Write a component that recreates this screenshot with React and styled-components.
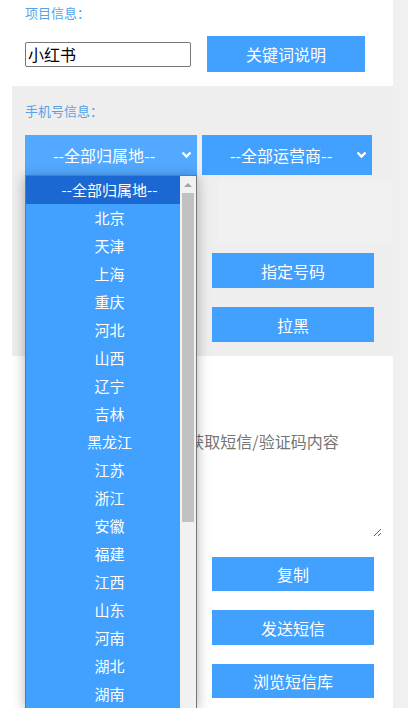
import React from "react";
import styled, { createGlobalStyle } from "styled-components";

const provinces = [
  "北京", "天津", "上海", "重庆", "河北", "山西", "辽宁", "吉林", "黑龙江",
  "江苏", "浙江", "安徽", "福建", "江西", "山东", "河南", "湖北", "湖南",
];

function Chevron() {
  return (
    <svg width="11" height="8" viewBox="0 0 11 8">
      <path d="M1.5 1.5 L5.5 5.5 L9.5 1.5" fill="none" stroke="#fff" strokeWidth="2.4" />
    </svg>
  );
}

function App() {
  return (
    <>
      <GlobalStyle />
      <Page>
        <ProjectBlock>
          <Label>项目信息：</Label>
          <Row>
            <NameInput defaultValue="小红书" />
            <BlueButton width="158px" height="36px">关键词说明</BlueButton>
          </Row>
        </ProjectBlock>

        <PhoneBlock>
          <Label>手机号信息：</Label>
          <SelectRow>
            <FakeSelect width="172px" focused>
              <span>--全部归属地--</span>
              <Chevron />
            </FakeSelect>
            <FakeSelect width="170px">
              <span>--全部运营商--</span>
              <Chevron />
            </FakeSelect>
          </SelectRow>
          <ActionRow>
            <Column>
              <PhoneArea />
              <BlueButton width="162px" height="35px">指定号码</BlueButton>
              <BlueButton width="162px" height="35px" top="19px">拉黑</BlueButton>
            </Column>
          </ActionRow>
        </PhoneBlock>

        <SmsBlock>
          <SmsArea placeholder="获取短信/验证码内容" />
          <ButtonStack>
            <BlueButton width="162px" height="34px">复制</BlueButton>
            <BlueButton width="162px" height="35px" top="19px">发送短信</BlueButton>
            <BlueButton width="162px" height="34px" top="19px">浏览短信库</BlueButton>
          </ButtonStack>
        </SmsBlock>

        <DropList>
          <Options>
            <Option selected>--全部归属地--</Option>
            {provinces.map((p) => (
              <Option key={p}>{p}</Option>
            ))}
          </Options>
          <ScrollTrack>
            <UpArrow />
            <Thumb />
          </ScrollTrack>
        </DropList>
      </Page>
    </>
  );
}

export default App;

const GlobalStyle = createGlobalStyle`
  html, body {
    margin: 0;
    padding: 0;
    background: #f0f0f0;
    overflow: hidden;
    font-family: "Noto Sans CJK SC", "Noto Sans", sans-serif;
  }
`;

const Page = styled.div`
  position: relative;
  width: 393px;
  height: 708px;
  overflow: hidden;
  background: #fff;
`;

const Label = styled.div`
  font-size: 13px;
  line-height: 16px;
  color: #55a3e8;
`;

const ProjectBlock = styled.div`
  padding: 5px 0 14px 25px;
`;

const Row = styled.div`
  display: flex;
  align-items: center;
  margin-top: 15px;
  gap: 16px;
`;

const NameInput = styled.input`
  box-sizing: border-box;
  width: 166px;
  height: 25px;
  border: 1px solid #767676;
  border-radius: 2px;
  padding: 0 2px;
  font-family: "Noto Sans CJK SC", sans-serif;
  font-size: 16px;
  color: #000;
  outline: none;
`;

const BlueButton = styled.div`
  display: flex;
  align-items: center;
  justify-content: center;
  width: ${(p) => p.width};
  height: ${(p) => p.height};
  margin-top: ${(p) => p.top || "0"};
  background: #42a0fe;
  color: #fff;
  font-size: 16px;
`;

const PhoneBlock = styled.div`
  margin-left: 12px;
  height: 270px;
  box-sizing: border-box;
  padding: 17px 0 0 13px;
  background: #eeeeee;
`;

const SelectRow = styled.div`
  display: flex;
  gap: 5px;
  margin-top: 16px;
`;

const FakeSelect = styled.div`
  display: flex;
  align-items: center;
  justify-content: space-between;
  box-sizing: border-box;
  width: ${(p) => p.width};
  height: 40px;
  padding: 0 5px 0 28px;
  background: ${(p) => (p.focused ? "#52a9ff" : "#42a0fe")};
  color: #fff;
  font-size: 16px;
`;

const ActionRow = styled.div`
  display: flex;
  padding-left: 187px;
  margin-top: 5px;
`;

const Column = styled.div`
  display: flex;
  flex-direction: column;
`;

const PhoneArea = styled.div`
  width: 174px;
  height: 63px;
  margin: 0 0 10px 6px;
  background: #f1f1f1;
`;

const SmsBlock = styled.div`
  display: flex;
  flex-direction: column;
  padding: 72px 0 0 145px;
`;

const SmsArea = styled.textarea`
  box-sizing: border-box;
  width: 237px;
  height: 109px;
  border: none;
  outline: none;
  padding: 2px;
  font-family: "Noto Sans CJK SC", sans-serif;
  font-size: 16px;
  line-height: 22px;
  text-align: center;
  background: #fff;
  &::placeholder {
    color: #757575;
  }
`;

const ButtonStack = styled.div`
  display: flex;
  flex-direction: column;
  margin: 20px 0 0 67px;
`;

const DropList = styled.div`
  position: absolute;
  left: 25px;
  top: 175px;
  width: 172px;
  box-sizing: border-box;
  display: flex;
  border: 1px solid #767676;
  border-bottom: none;
  background: #42a0fe;
  box-shadow: 0 2px 12px rgba(0, 0, 0, 0.3);
`;

const Options = styled.div`
  flex: 1;
  display: flex;
  flex-direction: column;
`;

const Option = styled.div`
  flex-shrink: 0;
  box-sizing: border-box;
  height: 28px;
  display: flex;
  align-items: center;
  justify-content: center;
  padding: 0 0 2px 13px;
  font-size: 15px;
  color: #fff;
  background: ${(p) => (p.selected ? "#1c68d3" : "transparent")};
`;

const ScrollTrack = styled.div`
  width: 16px;
  background: #f1f1f1;
  display: flex;
  flex-direction: column;
  align-items: center;
`;

const UpArrow = styled.div`
  margin-top: 7px;
  width: 0;
  height: 0;
  border-left: 4px solid transparent;
  border-right: 4px solid transparent;
  border-bottom: 4px solid #a3a3a3;
`;

const Thumb = styled.div`
  margin-top: 6px;
  width: 12px;
  height: 329px;
  background: #c1c1c1;
`;
